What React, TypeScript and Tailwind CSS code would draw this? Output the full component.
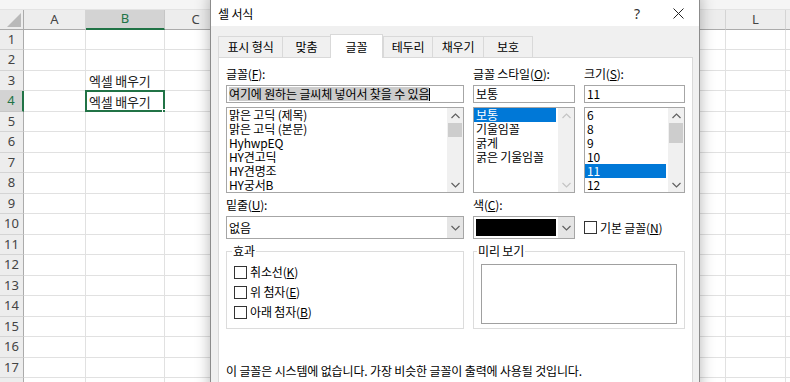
import React from "react";

const cols = [
  { label: "A", w: "w-[62px]" },
  { label: "B", w: "w-[79px]" },
  { label: "C", w: "w-[62px]" },
  { label: "D", w: "w-[62px]" },
  { label: "E", w: "w-[62px]" },
  { label: "F", w: "w-[62px]" },
  { label: "G", w: "w-[62px]" },
  { label: "H", w: "w-[62px]" },
  { label: "I", w: "w-[62px]" },
  { label: "J", w: "w-[62px]" },
  { label: "K", w: "w-[65px]" },
  { label: "L", w: "w-[60px]" },
  { label: "M", w: "w-[60px]" },
];

const rows = Array.from({ length: 18 }, (_, i) => i + 1);

function Sheet() {
  return (
    <div className="flex flex-col w-[900px] font-['Noto_Sans',sans-serif] text-[#444]">
      <div className="h-[10px] bg-[#f5f5f5] border-b border-[#e3e3e3]" />
      {/* column headers */}
      <div className="flex h-[20px] bg-[#ededed]">
        <div className="w-[24px] shrink-0 border-r border-b border-[#ababab] flex items-end justify-end p-[2px]">
          <svg width="14" height="14" viewBox="0 0 14 14">
            <polygon points="14,0 14,14 0,14" fill="#b9b9b9" />
          </svg>
        </div>
        {cols.map((c) =>
          c.label === "B" ? (
            <div
              key={c.label}
              className={`${c.w} shrink-0 flex items-center justify-center bg-[#d3d3d3] text-[#217346] text-[13px] border-r border-[#c6c6c6] border-b-2 border-b-[#217346]`}
            >
              {c.label}
            </div>
          ) : (
            <div
              key={c.label}
              className={`${c.w} shrink-0 flex items-center justify-center text-[13px] border-r border-[#d4d4d4] border-b border-b-[#ababab]`}
            >
              {c.label}
            </div>
          )
        )}
      </div>
      {rows.map((r) => (
        <div key={r} className={`flex ${r % 2 === 1 ? "h-[20px]" : "h-[21px]"}`}>
          {r === 4 ? (
            <div className="w-[24px] shrink-0 flex items-center justify-center bg-[#d3d3d3] text-[#217346] text-[13px] border-b border-[#c6c6c6] border-r-2 border-r-[#217346]">
              {r}
            </div>
          ) : (
            <div className="w-[24px] shrink-0 flex items-center justify-center bg-[#ededed] text-[13px] border-b border-[#d4d4d4] border-r border-r-[#ababab]">
              {r}
            </div>
          )}
          {cols.map((c) => (
            <div
              key={c.label}
              className={`${c.w} shrink-0 relative border-r border-b border-[#e1e1e1] bg-white flex items-center`}
            >
              {c.label === "B" && (r === 3 || r === 4) && (
                <span className="pl-[3px] text-[13px] tracking-[-0.2px] text-[#222] font-['Noto_Sans_CJK_KR',sans-serif] leading-none">
                  엑셀 배우기
                </span>
              )}
              {c.label === "B" && r === 4 && (
                <>
                  <div className="absolute -left-px -top-px -right-px -bottom-px border-2 border-[#217346]" />
                  <div className="absolute -right-[3px] -bottom-[3px] w-[5px] h-[5px] bg-[#217346] border border-white" />
                </>
              )}
            </div>
          ))}
        </div>
      ))}
    </div>
  );
}

function Chevron({ dir, color }: { dir: "up" | "down"; color: string }) {
  return (
    <svg width="9" height="6" viewBox="0 0 9 6">
      <polyline
        points={dir === "up" ? "0.5,5 4.5,1 8.5,5" : "0.5,1 4.5,5 8.5,1"}
        fill="none"
        stroke={color}
        strokeWidth="1.2"
      />
    </svg>
  );
}

function ScrollBar({ thumb, disabled }: { thumb?: string; disabled?: boolean }) {
  const color = disabled ? "#c4c4c4" : "#606060";
  return (
    <div className="w-[16px] shrink-0 flex flex-col bg-[#f0f0f0]">
      <div className="h-[15px] flex items-center justify-center">
        <Chevron dir="up" color={color} />
      </div>
      {thumb && <div className={`${thumb} mx-px bg-[#cdcdcd]`} />}
      <div className="flex-1" />
      <div className="h-[15px] flex items-center justify-center">
        <Chevron dir="down" color={color} />
      </div>
    </div>
  );
}

function ListBox({
  items,
  selected,
  thumb,
  disabled,
}: {
  items: string[];
  selected: string;
  thumb?: string;
  disabled?: boolean;
}) {
  return (
    <div className="mt-[4px] h-[86px] flex border border-[#a6a6a6] bg-white">
      <div className="flex-1 flex flex-col pr-[2px]">
        {items.map((it) => (
          <div
            key={it}
            className={`h-[14px] pl-[2px] leading-[14px] whitespace-nowrap ${
              it === selected ? "bg-[#0078d7] text-white" : ""
            }`}
          >
            {it}
          </div>
        ))}
      </div>
      <ScrollBar thumb={thumb} disabled={disabled} />
    </div>
  );
}

function TextBox({ children }: { children: React.ReactNode }) {
  return (
    <div className="mt-[3px] h-[18px] border border-[#a6a6a6] bg-white flex items-center px-[2px] whitespace-nowrap">
      {children}
    </div>
  );
}

function CheckBox({ children }: { children: React.ReactNode }) {
  return (
    <div className="flex items-center gap-[3px] h-[20px]">
      <div className="w-[13px] h-[13px] border border-[#333] bg-white shrink-0" />
      <span>{children}</span>
    </div>
  );
}

function FormatDialog() {
  const tabs = [
    { t: "표시 형식", w: "w-[64px]" },
    { t: "맞춤", w: "w-[48px]" },
    { t: "글꼴", w: "w-[53px]" },
    { t: "테두리", w: "w-[49px]" },
    { t: "채우기", w: "w-[51px]" },
    { t: "보호", w: "w-[50px]" },
  ];
  return (
    <div className="absolute left-[210px] top-[-6px] w-[490px] h-[400px] flex flex-col border border-[#8c8c8c] bg-[#f0f0f0] shadow-[0_0_14px_rgba(0,0,0,0.3)] font-['Noto_Sans_CJK_KR',sans-serif] text-[12px] tracking-[-0.15px] text-black leading-none">
      {/* title bar */}
      <div className="h-[31px] pt-[6px] bg-white flex items-center pl-[7px]">
        <span className="flex-1">셀 서식</span>
        <span className="w-[20px] mr-[10px] text-center text-[14px] text-[#333] font-['Noto_Sans',sans-serif]">?</span>
        <div className="w-[42px] flex items-center justify-center">
          <svg width="11" height="11" viewBox="0 0 11 11">
            <path d="M0.5 0.5 L10.5 10.5 M10.5 0.5 L0.5 10.5" stroke="#222" strokeWidth="1" />
          </svg>
        </div>
      </div>
      {/* body */}
      <div className="flex-1 flex flex-col pl-[7px] pr-[6px] pt-[8px]">
        <div className="flex items-end h-[23px]">
          {tabs.map((tab) =>
            tab.t === "글꼴" ? (
              <div
                key={tab.t}
                className={`${tab.w} h-[24px] -mb-px relative z-10 bg-white border border-b-0 border-[#d9d9d9] flex items-center justify-center`}
              >
                {tab.t}
              </div>
            ) : (
              <div
                key={tab.t}
                className={`${tab.w} h-[21px] bg-[#f0f0f0] border border-b-0 border-r-0 border-[#d9d9d9] last:border-r flex items-center justify-center`}
              >
                {tab.t}
              </div>
            )
          )}
        </div>
        <div className="flex-1 bg-white border border-[#d9d9d9] pl-[7px] pt-[8px]">
          {/* top lists */}
          <div className="flex gap-[9px]">
            <div className="w-[238px] flex flex-col">
              <div className="h-[16px] flex items-center">
                글꼴(<u>F</u>):
              </div>
              <TextBox>
                <span className="bg-[#cccccc] leading-[14px]">여기에 원하는 글씨체 넣어서 찾을 수 있음</span>
                <span className="w-px h-[13px] bg-black" />
              </TextBox>
              <ListBox
                items={["맑은 고딕 (제목)", "맑은 고딕 (본문)", "HyhwpEQ", "HY견고딕", "HY견명조", "HY궁서B"]}
                selected=""
                thumb="h-[14px]"
              />
            </div>
            <div className="w-[102px] flex flex-col">
              <div className="h-[16px] flex items-center whitespace-nowrap">
                글꼴 스타일(<u>O</u>):
              </div>
              <TextBox>보통</TextBox>
              <ListBox items={["보통", "기울임꼴", "굵게", "굵은 기울임꼴"]} selected="보통" disabled />
            </div>
            <div className="w-[101px] flex flex-col">
              <div className="h-[16px] flex items-center">
                크기(<u>S</u>):
              </div>
              <TextBox>11</TextBox>
              <ListBox items={["6", "8", "9", "10", "11", "12"]} selected="11" thumb="h-[20px]" />
            </div>
          </div>

          {/* underline / color row */}
          <div className="flex gap-[9px] mt-[4px]">
            <div className="w-[238px] flex flex-col">
              <div className="h-[16px] flex items-center">
                밑줄(<u>U</u>):
              </div>
              <div className="mt-[3px] h-[23px] flex border border-[#a6a6a6] bg-white">
                <div className="flex-1 flex items-center pl-[2px]">없음</div>
                <div className="w-[16px] bg-[#e5e5e5] flex items-center justify-center">
                  <Chevron dir="down" color="#606060" />
                </div>
              </div>
            </div>
            <div className="w-[102px] flex flex-col">
              <div className="h-[16px] flex items-center">
                색(<u>C</u>):
              </div>
              <div className="mt-[3px] h-[23px] flex border border-[#a6a6a6] bg-white">
                <div className="flex-1 p-[2px]">
                  <div className="h-full bg-black" />
                </div>
                <div className="w-[16px] bg-[#e5e5e5] flex items-center justify-center">
                  <Chevron dir="down" color="#606060" />
                </div>
              </div>
            </div>
            <div className="w-[101px] flex flex-col justify-end">
              <div className="h-[23px] flex items-center">
                <CheckBox>
                  기본 글꼴(<u>N</u>)
                </CheckBox>
              </div>
            </div>
          </div>

          {/* group boxes */}
          <div className="flex gap-[9px] mt-[12px]">
            <div className="relative w-[238px] h-[78px] border border-[#dcdcdc] pl-[7px] pt-[10px]">
              <span className="absolute left-[5px] -top-[7px] bg-white px-[1px]">효과</span>
              <CheckBox>
                취소선(<u>K</u>)
              </CheckBox>
              <CheckBox>
                위 첨자(<u>E</u>)
              </CheckBox>
              <CheckBox>
                아래 첨자(<u>B</u>)
              </CheckBox>
            </div>
            <div className="relative w-[212px] h-[78px] border border-[#dcdcdc] px-[7px] pt-[12px] pb-[4px]">
              <span className="absolute left-[3px] -top-[7px] bg-white px-[1px]">미리 보기</span>
              <div className="h-full border border-[#a0a0a0] bg-white" />
            </div>
          </div>

          <div className="mt-[34px] h-[16px] flex items-center whitespace-nowrap">
            이 글꼴은 시스템에 없습니다. 가장 비슷한 글꼴이 출력에 사용될 것입니다.
          </div>
        </div>
      </div>
    </div>
  );
}

export default function App() {
  return (
    <div className="relative w-[790px] h-[382px] overflow-hidden bg-white">
      <Sheet />
      <FormatDialog />
    </div>
  );
}
